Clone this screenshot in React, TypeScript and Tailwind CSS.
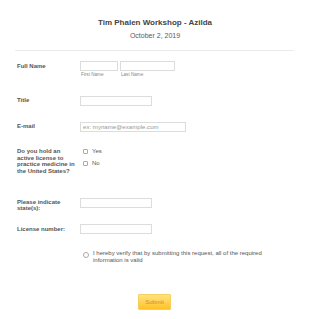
import React from "react";

function Box({ w, children }: { w: string; children?: React.ReactNode }) {
  return (
    <div className={`${w} h-[10px] border border-[#dcdcdc] bg-white flex items-center pl-[2px]`}>
      {children}
    </div>
  );
}

export default function App() {
  return (
    <div className="w-[310px] h-[319px] bg-white font-['Liberation_Sans',Arial,sans-serif] text-[#555] overflow-hidden">
      <div className="pt-[18px] text-center">
        <div className="text-[8px] leading-[10px] font-bold text-[#444]">Tim Phalen Workshop - Azilda</div>
        <div className="mt-[3px] text-[7px] leading-[9px] text-[#5a5a5a]">October 2, 2019</div>
      </div>
      <div className="ml-[15px] mr-[16px] mt-[10px] border-t border-[#ececec]" />

      <div className="pl-[17px]">
        {/* Full name */}
        <div className="mt-[10px] flex items-start h-[17px]">
          <div className="w-[63px] text-[6px] leading-[10px] font-bold">Full Name</div>
          <div className="flex gap-[2px]">
            <div>
              <Box w="w-[38px]" />
              <div className="mt-[1px] pl-[1px] text-[4.6px] leading-[6px] text-[#888]">First Name</div>
            </div>
            <div>
              <Box w="w-[55px]" />
              <div className="mt-[1px] pl-[1px] text-[4.6px] leading-[6px] text-[#888]">Last Name</div>
            </div>
          </div>
        </div>

        {/* Title */}
        <div className="mt-[18px] flex items-start h-[10px]">
          <div className="w-[63px] text-[6px] leading-[9px] font-bold">Title</div>
          <Box w="w-[72px]" />
        </div>

        {/* Email */}
        <div className="mt-[16px] flex items-start h-[10px]">
          <div className="w-[63px] text-[6px] leading-[9px] font-bold">E-mail</div>
          <Box w="w-[106px]">
            <span className="text-[6.1px] leading-[8px] text-[#999]">ex: myname@example.com</span>
          </Box>
        </div>

        {/* Question */}
        <div className="mt-[16px] flex items-start h-[27px]">
          <div className="w-[63px] pr-[2px] text-[6px] leading-[6.7px] font-bold">
            Do you hold an active license to practice medicine in the United States?
          </div>
          <div className="flex flex-col gap-[5px] pl-[3px]">
            <div className="flex items-start h-[7px]">
              <span className="mt-[1px] w-[5px] h-[5px] border border-[#aaa] rounded-[1px] bg-white" />
              <span className="ml-[4px] text-[6px] leading-[6px]">Yes</span>
            </div>
            <div className="flex items-start h-[7px]">
              <span className="mt-[1px] w-[5px] h-[5px] border border-[#aaa] rounded-[1px] bg-white" />
              <span className="ml-[4px] text-[6px] leading-[6px]">No</span>
            </div>
          </div>
        </div>

        {/* States */}
        <div className="mt-[23px] flex items-start h-[14px]">
          <div className="w-[63px] text-[6px] leading-[6.7px] font-bold pt-[0.5px]">Please indicate state(s):</div>
          <Box w="w-[72px]" />
        </div>

        {/* License */}
        <div className="mt-[12px] flex items-start h-[10px]">
          <div className="w-[63px] text-[6px] leading-[10px] font-bold">License number:</div>
          <Box w="w-[72px]" />
        </div>

        {/* Verify */}
        <div className="mt-[16px] flex items-start pl-[66px]">
          <span className="mt-[2px] w-[6px] h-[6px] shrink-0 rounded-full border border-[#aaa] bg-white" />
          <div className="ml-[4px] w-[175px] text-[6px] leading-[7px] text-[#555]">
            I hereby verify that by submitting this request, all of the required information is valid
          </div>
        </div>

        {/* Submit */}
        <div className="mt-[23px] pl-[121px]">
          <button className="w-[33px] h-[16px] rounded-[1px] border border-[#f7cf5f] bg-gradient-to-b from-[#ffe37a] to-[#ffc21c] text-[6px] leading-[14px] text-[#d48a2a]">
            Submit
          </button>
        </div>
      </div>
    </div>
  );
}
